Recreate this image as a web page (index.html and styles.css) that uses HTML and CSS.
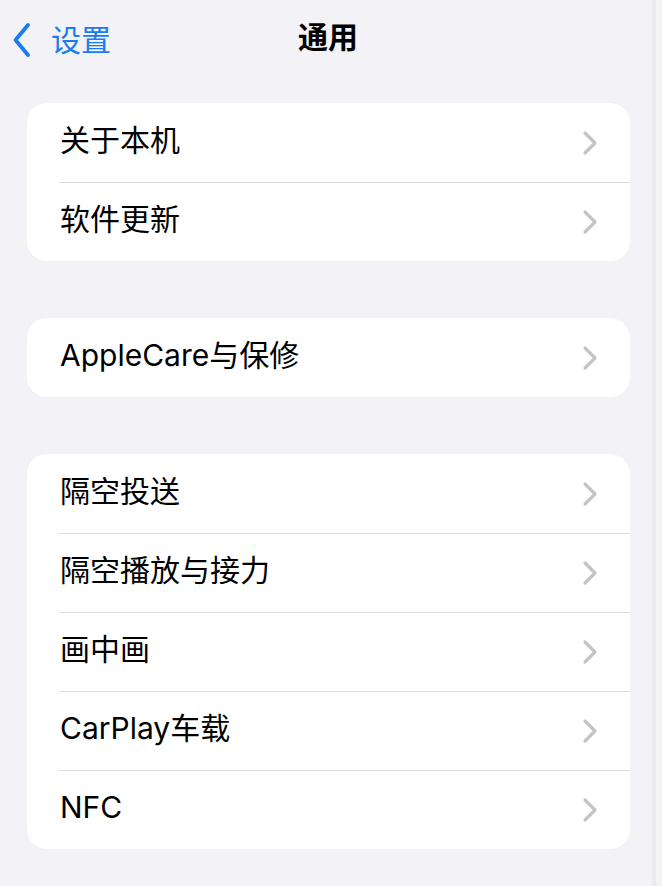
FILE: index.html
```html
<!DOCTYPE html>
<html>
    <head>
        <title>通用</title>
        <link rel="stylesheet" href="styles.css">
    </head>
    <body>
    <div class="page">
        <div class="navbar">
            <a class="back" href="#">
                <svg class="back-icon" width="20" height="36" viewBox="0 0 20 36">
                    <path d="M16 3 L3.5 18 L16 33" fill="none" stroke="#1a7cf0" stroke-width="3.8" stroke-linecap="round" stroke-linejoin="round"/>
                </svg>
                <span>设置</span>
            </a>
            <h1 class="title">通用</h1>
        </div>

        <div class="list">
            <div class="group">
                <div class="row"><span>关于本机</span><svg class="chev" width="16" height="26" viewBox="0 0 16 26"><path d="M3 3 L13 13 L3 23" /></svg></div>
                <div class="row"><span>软件更新</span><svg class="chev" width="16" height="26" viewBox="0 0 16 26"><path d="M3 3 L13 13 L3 23" /></svg></div>
            </div>

            <div class="group">
                <div class="row"><span>AppleCare与保修</span><svg class="chev" width="16" height="26" viewBox="0 0 16 26"><path d="M3 3 L13 13 L3 23" /></svg></div>
            </div>

            <div class="group">
                <div class="row"><span>隔空投送</span><svg class="chev" width="16" height="26" viewBox="0 0 16 26"><path d="M3 3 L13 13 L3 23" /></svg></div>
                <div class="row"><span>隔空播放与接力</span><svg class="chev" width="16" height="26" viewBox="0 0 16 26"><path d="M3 3 L13 13 L3 23" /></svg></div>
                <div class="row"><span>画中画</span><svg class="chev" width="16" height="26" viewBox="0 0 16 26"><path d="M3 3 L13 13 L3 23" /></svg></div>
                <div class="row"><span>CarPlay车载</span><svg class="chev" width="16" height="26" viewBox="0 0 16 26"><path d="M3 3 L13 13 L3 23" /></svg></div>
                <div class="row"><span>NFC</span><svg class="chev" width="16" height="26" viewBox="0 0 16 26"><path d="M3 3 L13 13 L3 23" /></svg></div>
            </div>
        </div>
    </div>
    </body>
</html>
```

FILE: styles.css
```css
body{
    margin: 0;
    font-family: "Inter", "Noto Sans CJK SC", sans-serif;
    background-color: #f2f2f7;
    color: #000;
}
.page{
    min-height: 886px;
    border-right: 4px solid #e9e9ee;
    margin-right: 6px;
}
.navbar{
    height: 78px;
    display: flex;
    align-items: center;
    justify-content: center;
    position: relative;
}
.back{
    position: absolute;
    left: 12px;
    top: 20px;
    display: flex;
    align-items: center;
    gap: 19px;
    color: #1a7cf0;
    text-decoration: none;
    font-size: 30px;
}
.back span{
    font-family: "Noto Sans CJK SC", sans-serif;
    line-height: 36px;
    margin-bottom: 3px;
}
.title{
    margin: 0 0 8px 4px;
    font-family: "Noto Sans CJK SC", sans-serif;
    font-size: 30px;
    font-weight: bold;
}
.list{
    padding: 25px 22px 0 27px;
}
.group{
    background-color: #fff;
    border-radius: 20px;
    margin-bottom: 57px;
    overflow: hidden;
}
.row{
    height: 79px;
    box-sizing: border-box;
    display: flex;
    align-items: center;
    justify-content: space-between;
    padding: 0 32px 0 33px;
    font-size: 30px;
    position: relative;
}
.row span{
    line-height: 36px;
    margin-bottom: 6px;
}
.row + .row::before{
    content: "";
    position: absolute;
    top: 0;
    left: 32px;
    right: 0;
    height: 1px;
    background-color: #dcdcdf;
}
.chev path{
    fill: none;
    stroke: #c4c4c7;
    stroke-width: 3.2;
    stroke-linecap: round;
    stroke-linejoin: round;
}
```
